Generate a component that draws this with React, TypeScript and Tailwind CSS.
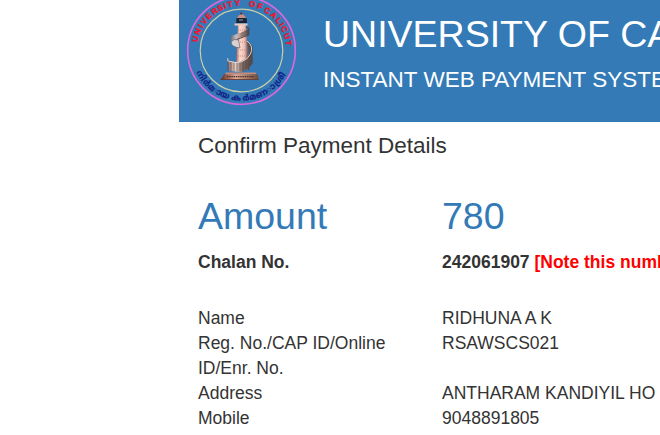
import React from "react";

const ringTitle: [string, number][] = [
  ["U", -76], ["N", -66.5], ["I", -59], ["V", -52], ["E", -43.5], ["R", -34.5], ["S", -26.5], ["I", -20.5], ["T", -14], ["Y", -5],
  ["O", 13], ["F", 22.5],
  ["C", 33], ["A", 42.5], ["L", 51], ["I", 57], ["C", 63.5], ["U", 72.5], ["T", 81],
];

const motto: [string, number][] = [
  ["നി", 58],
  ["ർമ", 43],
  ["ാ", 31],
  ["യ", 20.5],
  ["ക", 6.5],
  ["ർമ", -9.5],
  ["ണ", -25],
  ["ാ", -38],
  ["ശ്രീ", -53],
];

function Emblem() {
  return (
    <svg className="h-[110px] w-[110px] shrink-0" viewBox="186 -4 110 110" aria-label="University of Calicut">
      <defs>
        <linearGradient id="tower" x1="0" x2="1">
          <stop offset="0" stopColor="#a85c50" />
          <stop offset=".3" stopColor="#fbdcd2" />
          <stop offset=".65" stopColor="#efbdb2" />
          <stop offset="1" stopColor="#5a3434" />
        </linearGradient>
        <linearGradient id="rail" x1="0" x2="1">
          <stop offset="0" stopColor="#8d6961" />
          <stop offset=".3" stopColor="#e8d3cb" />
          <stop offset=".6" stopColor="#77645f" />
          <stop offset="1" stopColor="#4a4343" />
        </linearGradient>
        <linearGradient id="base" x1="0" x2="1">
          <stop offset="0" stopColor="#5e2c22" />
          <stop offset=".4" stopColor="#e0aa96" />
          <stop offset="1" stopColor="#6a4a3a" />
        </linearGradient>
      </defs>
      <circle cx="241.5" cy="50.5" r="53.8" fill="none" stroke="#d869dc" strokeWidth="1.7" />
      <circle cx="241.5" cy="50.5" r="41.3" fill="none" stroke="#c9cfa8" strokeWidth="1.2" />
      <g fill="#f2142c" stroke="#f2142c" strokeWidth=".4" textAnchor="middle" className="font-['Liberation_Sans'] text-[8px] font-bold">
        {ringTitle.map(([letter, angle]) => (
          <text key={angle} x="241.5" y="5.5" transform={`rotate(${angle} 241.5 50.5)`}>{letter}</text>
        ))}
      </g>
      <g fill="#14258a" stroke="#14258a" strokeWidth=".2" textAnchor="middle" className="font-['Noto_Sans_Malayalam','Noto_Sans',sans-serif] text-[8.5px] font-bold">
        {motto.map(([glyph, angle]) => (
          <text key={angle} x="241.5" y="100.7" transform={`rotate(${angle} 241.5 50.5)`}>{glyph}</text>
        ))}
      </g>
      <path d="M238 24 L246 24 L249 70 L236 70Z" fill="url(#tower)" />
      <path d="M237 18 Q241.5 10 246 18Z" fill="#c98e80" />
      <circle cx="241.2" cy="13.6" r="1.1" fill="#5b2d2b" />
      <path d="M236.5 18h10l.6 5h-11z" fill="#1c2433" />
      <path d="M239 20h4" stroke="#718ea8" strokeWidth="1.2" />
      <path d="M234.5 23.5h13v2h-13z" fill="#e7c9bd" />
      <path d="M238 30h8M238 36h8M238 42h9M238 50h9M238 56h9" stroke="#bb7166" strokeWidth=".7" strokeDasharray="1 1" />
      <path d="M246 27.5 Q250 27 249 30 L248.5 35 Q240 38 231.5 42" fill="none" stroke="#57494c" strokeWidth="1.2" />
      <path d="M231 36 Q240 33.5 249 29 L249 35 Q238 37 231 42Z" fill="url(#rail)" fillOpacity=".8" />
      <path d="M231 42 Q231 47 240 48 L238.5 40 Q234 38 231 42Z" fill="#d7d1d1" stroke="#625052" strokeWidth=".6" />
      <path d="M247 41 Q254 45 252.5 51 L252.5 63 Q249 70 241 72 L229 71 L228 61 Q243 65 249 55Z" fill="url(#rail)" />
      <path d="M228 58v13M231 62v9M234 63v8M237 63v8M240 63v8M243 62v9M246 60v10M249 56v13M252 49v16" stroke="#614842" strokeWidth=".6" />
      <path d="M227.8 58v3 Q244 66 250.5 54 Q254 46 247 41" fill="none" stroke="#ead9d3" strokeWidth=".9" />
      <path d="M226 72.5h29.5l1 2h-31.5z" fill="#c98b78" />
      <path d="M224 74.2h33.5l1.2 5.6h-38z" fill="url(#base)" />
      <path d="M227 76.6h27" stroke="#4f302a" strokeWidth="1.1" strokeDasharray="1.5 .7" />
      <path d="M220.5 79.5h38" stroke="#673c32" strokeWidth=".9" />
    </svg>
  );
}

const details = [
  ["Name", "RIDHUNA A K"],
  ["Reg. No./CAP ID/Online ID/Enr. No.", "RSAWSCS021"],
  ["Address", "ANTHARAM KANDIYIL HO"],
  ["Mobile", "9048891805"],
];

export default function App() {
  return (
    <div className="h-[435px] w-[660px] overflow-hidden bg-white pl-[179px] font-['Liberation_Sans',Arial,sans-serif] text-[17.5px] leading-[25px] text-[#333]">
      <header className="flex h-[122px] items-start overflow-hidden bg-[#337ab7] pl-[7px] text-white">
        <div className="-mt-1 shrink-0"><Emblem /></div>
        <div className="ml-[27px] pt-[14px] whitespace-nowrap">
          <h1 className="text-[37.5px] leading-[41px]">UNIVERSITY OF CALICUT</h1>
          <h2 className="mt-[12px] text-[22.5px] leading-[25px]">INSTANT WEB PAYMENT SYSTEM</h2>
        </div>
      </header>
      <main className="pl-[19px]">
        <h3 className="pt-[11px] text-[22.5px] leading-[25px]">Confirm Payment Details</h3>
        <div className="mt-[38px] flex text-[37.5px] leading-[41px] text-[#337ab7]">
          <div className="w-[244px] shrink-0">Amount</div>
          <div>780</div>
        </div>
        <div className="mt-[13px] flex font-bold whitespace-nowrap">
          <div className="w-[244px] shrink-0">Chalan No.</div>
          <div>242061907 <span className="text-[#f00]">[Note this number]</span></div>
        </div>
        <dl className="mt-[31px]">
          {details.map(([label, value]) => (
            <div className="flex" key={label}>
              <dt className="w-[244px] shrink-0 pr-[38px]">{label}</dt>
              <dd className="whitespace-nowrap">{value}</dd>
            </div>
          ))}
        </dl>
      </main>
    </div>
  );
}
